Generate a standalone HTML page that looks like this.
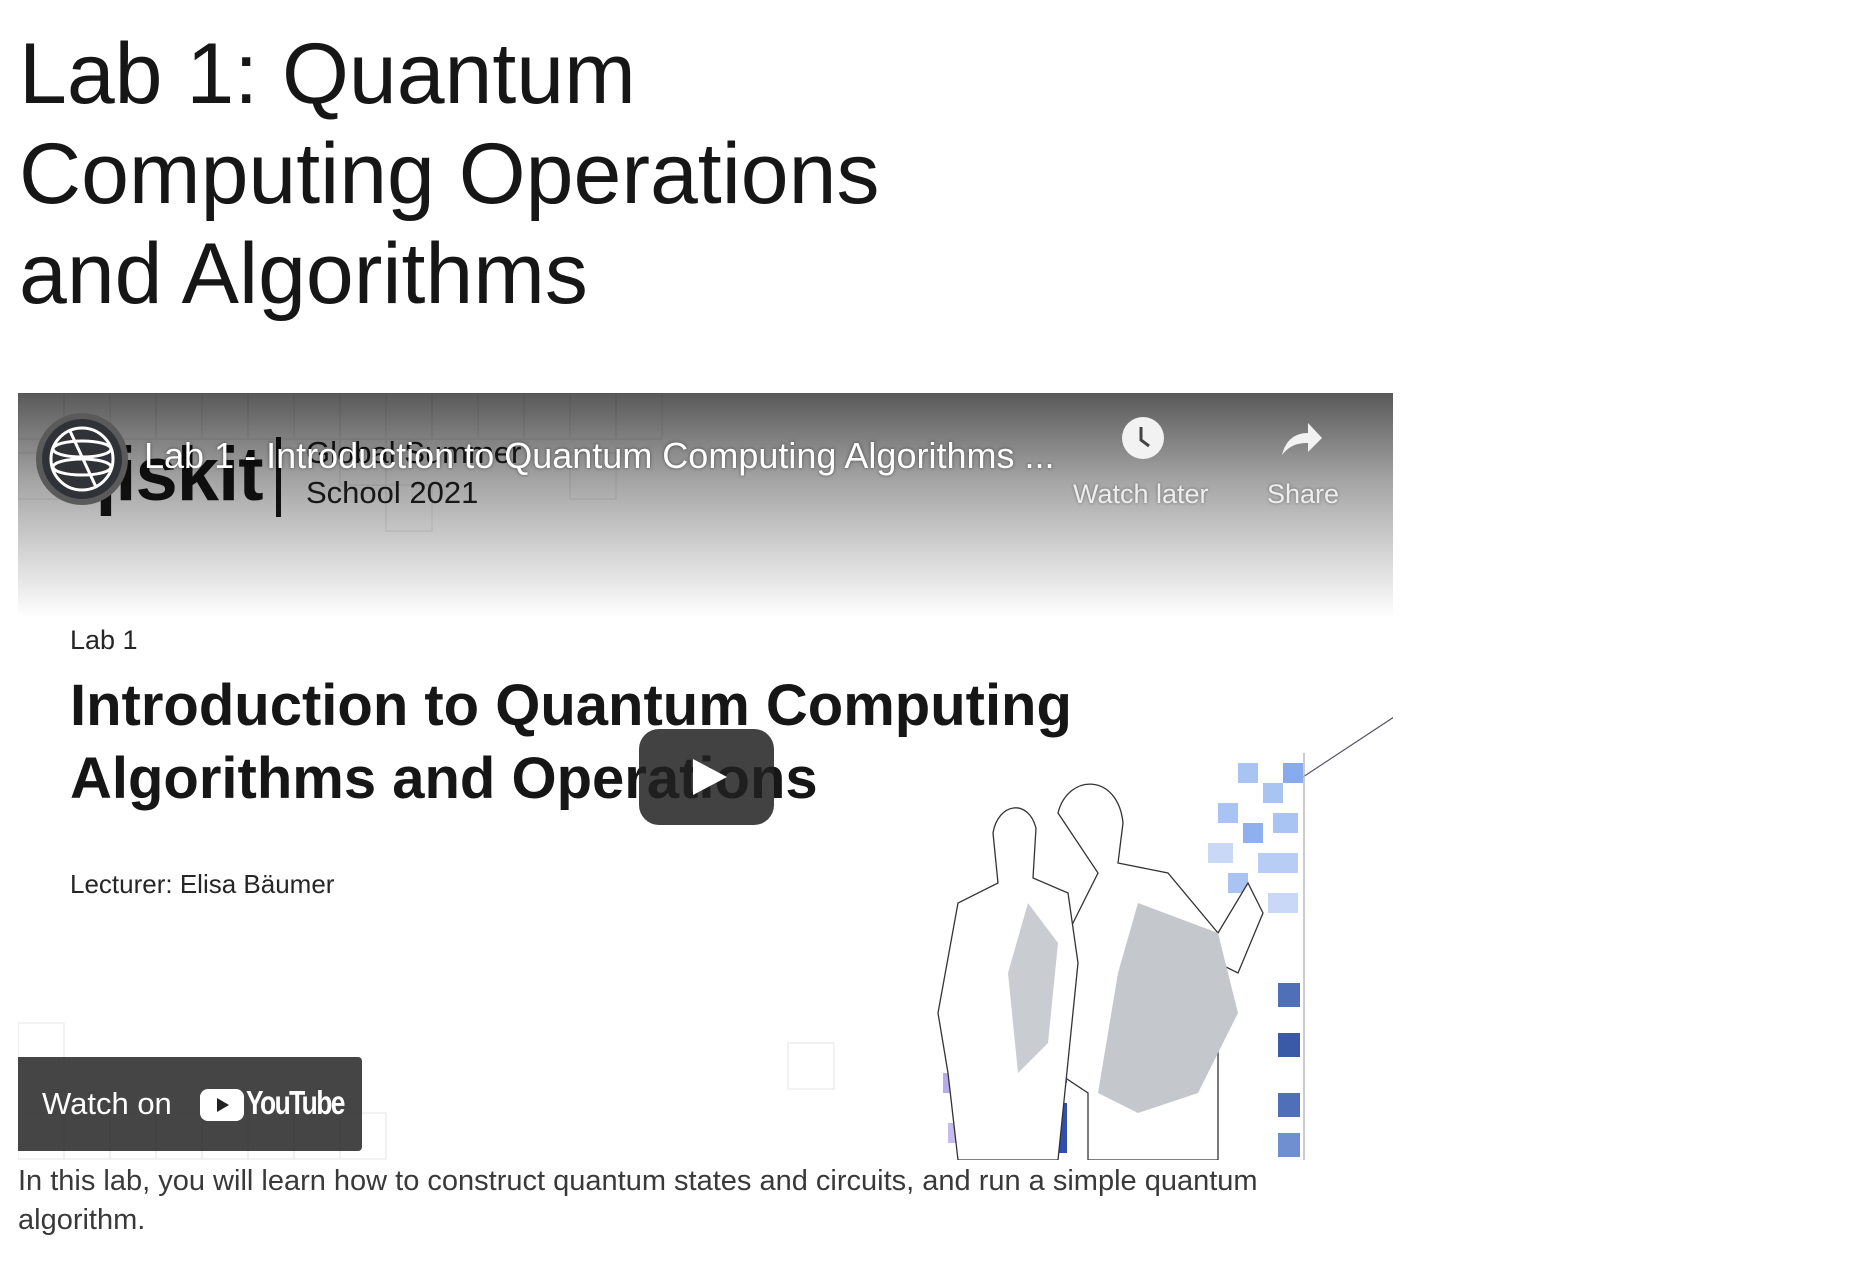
<!DOCTYPE html>
<html><head><meta charset="utf-8"><style>
*{margin:0;padding:0;box-sizing:border-box}
body{width:1873px;height:1279px;background:#fff;font-family:"Liberation Sans",sans-serif;position:relative;overflow:hidden}
h1{position:absolute;left:19px;top:0;font-weight:300;font-size:86px;line-height:100px;color:#161616;white-space:nowrap;margin-top:24px}
.v{position:absolute;left:18px;top:393px;width:1375px;height:767px;background:#fff;overflow:hidden}
.abs{position:absolute;white-space:nowrap}
.desc{position:absolute;left:18px;top:1162px;font-size:29px;line-height:39px;color:#393939;width:1300px}
</style></head><body>
<h1>Lab 1: Quantum<br>Computing Operations<br>and Algorithms</h1>

<div class="v">
  <svg class="abs" style="left:0;top:0" width="1375" height="767">
    <g fill="none" stroke="#eee" stroke-width="1.5">
      <rect x="0" y="0" width="46" height="46"/><rect x="46" y="0" width="46" height="46"/><rect x="92" y="0" width="46" height="46"/><rect x="138" y="0" width="46" height="46"/><rect x="184" y="0" width="46" height="46"/><rect x="230" y="0" width="46" height="46"/><rect x="276" y="0" width="46" height="46"/><rect x="322" y="0" width="46" height="46"/><rect x="368" y="0" width="46" height="46"/><rect x="414" y="0" width="46" height="46"/><rect x="460" y="0" width="46" height="46"/><rect x="506" y="0" width="46" height="46"/><rect x="552" y="0" width="46" height="46"/><rect x="598" y="0" width="46" height="46"/>
      <rect x="0" y="60" width="46" height="46"/><rect x="368" y="92" width="46" height="46"/><rect x="552" y="60" width="46" height="46"/><rect x="322" y="46" width="46" height="46"/>
      <rect x="0" y="630" width="46" height="46"/><rect x="770" y="650" width="46" height="46"/>
      <rect x="0" y="720" width="46" height="46"/><rect x="46" y="720" width="46" height="46"/><rect x="92" y="720" width="46" height="46"/><rect x="138" y="720" width="46" height="46"/><rect x="184" y="720" width="46" height="46"/><rect x="230" y="720" width="46" height="46"/><rect x="276" y="720" width="46" height="46"/><rect x="322" y="720" width="46" height="46"/>
    </g>
  </svg>
  <div class="abs" style="left:52px;top:38px;font-size:76px;font-weight:bold;color:#161616;letter-spacing:-1px">qiskit</div>
  <div class="abs" style="left:258px;top:44px;width:5px;height:80px;background:#161616"></div>
  <div class="abs" style="left:288px;top:40px;font-size:31px;line-height:40px;color:#222">Global Summer<br>School 2021</div>
  <div class="abs" style="left:52px;top:232px;font-size:27px;color:#262626">Lab 1</div>
  <div class="abs" style="left:52px;top:276px;font-size:58px;line-height:73px;font-weight:bold;color:#161616">Introduction to Quantum Computing<br>Algorithms and Operations</div>
  <div class="abs" style="left:52px;top:476px;font-size:26px;color:#262626">Lecturer: Elisa Bäumer</div>
  <svg class="abs" style="left:900px;top:320px" width="475" height="447">
    <line x1="385" y1="64" x2="482" y2="0" stroke="#556" stroke-width="1.2"/>
    <line x1="386" y1="40" x2="386" y2="447" stroke="#bbb" stroke-width="1.5"/>
    <g fill="#a9c4f2">
      <rect x="320" y="50" width="20" height="20"/><rect x="345" y="70" width="20" height="20"/><rect x="365" y="50" width="20" height="20" fill="#88aaee"/>
      <rect x="300" y="90" width="20" height="20"/><rect x="325" y="110" width="20" height="20" fill="#8fb0ee"/><rect x="355" y="100" width="25" height="20"/>
      <rect x="290" y="130" width="25" height="20" fill="#c9d8f6"/><rect x="340" y="140" width="40" height="20" fill="#b8cdf4"/><rect x="310" y="160" width="20" height="20"/><rect x="350" y="180" width="30" height="20" fill="#c9d8f6"/>
    </g>
    <g fill="#4f6fb8">
      <rect x="360" y="270" width="22" height="24"/><rect x="360" y="320" width="22" height="24" fill="#3a5aa8"/><rect x="360" y="380" width="22" height="24"/><rect x="360" y="420" width="22" height="24" fill="#6f8fd0"/>
      <rect x="125" y="340" width="24" height="30" fill="#3e5fc0"/><rect x="125" y="390" width="24" height="50" fill="#2f4fb0"/>
    </g>
    <g fill="#9d8fe0">
      <rect x="30" y="300" width="20" height="20"/><rect x="50" y="330" width="20" height="20"/><rect x="25" y="360" width="20" height="20" fill="#b7abe9"/><rect x="55" y="380" width="20" height="20"/><rect x="30" y="410" width="20" height="20" fill="#c5bbee"/><rect x="60" y="420" width="20" height="22"/>
    </g>
    <path d="M140 100 C150 60 200 60 205 110 L200 150 L250 160 L300 220 L330 170 L345 200 L320 260 L300 250 L300 447 L170 447 L170 380 L140 360 L150 220 L180 160 Z" fill="#fff" stroke="#333" stroke-width="1.3"/>
    <path d="M220 190 L300 220 L320 300 L280 380 L220 400 L180 380 L200 260 Z" fill="#c4c8cc"/>
    <path d="M20 300 L40 190 L80 170 L75 120 C80 90 110 85 118 115 L115 165 L150 180 L160 250 L140 447 L40 447 L30 360 Z" fill="#fff" stroke="#333" stroke-width="1.3"/>
    <path d="M110 190 L140 230 L130 330 L100 360 L90 260 Z" fill="#c9ccd0"/>
  </svg>
  <div class="abs" style="left:0;top:0;width:1375px;height:225px;background:linear-gradient(to bottom,rgba(0,0,0,.65),rgba(0,0,0,.35) 40%,rgba(0,0,0,0))"></div>
  <svg class="abs" style="left:16px;top:18px" width="96" height="96">
    <circle cx="48" cy="48" r="46" fill="#5a5a5a"/>
    <circle cx="48" cy="48" r="40" fill="#2f3338"/>
    <g fill="none" stroke="#fff" stroke-width="3">
      <circle cx="48" cy="48" r="31"/>
      <ellipse cx="48" cy="38" rx="29" ry="8"/><ellipse cx="48" cy="56" rx="29" ry="8"/>
      <line x1="36" y1="20" x2="62" y2="76"/>
    </g>
  </svg>
  <div class="abs" style="left:126px;top:42px;font-size:36px;color:#fff;text-shadow:0 0 3px rgba(0,0,0,.5)">Lab 1 - Introduction to Quantum Computing Algorithms ...</div>
  <svg class="abs" style="left:1104px;top:24px" width="42" height="42"><circle cx="21" cy="21" r="21" fill="#f2f2f2"/><path d="M19 10 V23 L27 29" stroke="#444" stroke-width="3" fill="none"/></svg>
  <div class="abs" style="left:1055px;top:86px;font-size:27px;color:#eee;text-shadow:0 0 3px rgba(0,0,0,.4)">Watch later</div>
  <svg class="abs" style="left:1262px;top:24px" width="44" height="42"><path d="M2 38 C6 22 16 16 28 16 V6 L42 21 L28 35 V26 C18 26 10 28 2 38 Z" fill="#f2f2f2"/></svg>
  <div class="abs" style="left:1249px;top:86px;font-size:27px;color:#eee;text-shadow:0 0 3px rgba(0,0,0,.4)">Share</div>
  <div class="abs" style="left:621px;top:336px;width:135px;height:96px;border-radius:20px;background:rgba(33,33,33,.85)"></div>
  <svg class="abs" style="left:621px;top:336px" width="135" height="96"><path d="M54 30 L88 48 L54 66 Z" fill="#fff"/></svg>
  <div class="abs" style="left:0;top:664px;width:344px;height:94px;background:rgba(33,33,33,.84);border-radius:0 4px 4px 0"></div>
  <div class="abs" style="left:24px;top:693px;font-size:31px;color:#fff">Watch on</div>
  <svg class="abs" style="left:182px;top:696px" width="44" height="32"><rect x="0" y="0" width="44" height="32" rx="8" fill="#fff"/><path d="M17 9 L29 16 L17 23 Z" fill="#222"/></svg>
  <div class="abs" style="left:228px;top:691px;font-size:33px;font-weight:bold;color:#fff;letter-spacing:-2px;transform:scaleX(.8);transform-origin:left">YouTube</div>
</div>

<div class="desc">In this lab, you will learn how to construct quantum states and circuits, and run a simple quantum algorithm.</div>
</body></html>
